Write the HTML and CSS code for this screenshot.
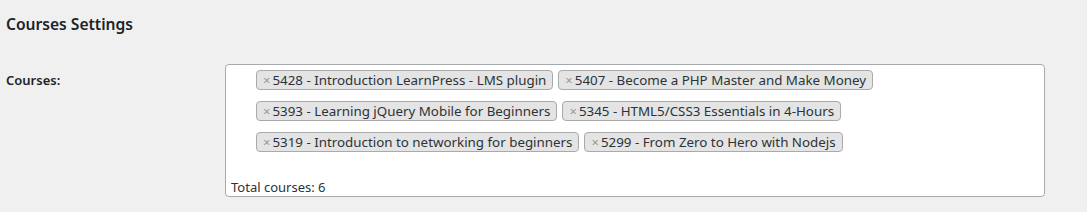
FILE: index.html
```html
<!DOCTYPE html>
<html lang="en">
<head>
    <meta charset="UTF-8">
    <meta name="viewport" content="width=device-width, initial-scale=1.0">
    <title>Courses Settings</title>
    <link rel="stylesheet" href="styles.css">
</head>
<body>
    <div class="wrap">
        <h2 class="section-title">Courses Settings</h2>
        <div class="form-row">
            <label class="field-label">Courses:</label>
            <div class="field">
                <div class="course-box">
                    <ul class="tags">
                        <li class="tag"><span class="tag-remove">×</span>5428 - Introduction LearnPress - LMS plugin</li>
                        <li class="tag"><span class="tag-remove">×</span>5407 - Become a PHP Master and Make Money</li>
                        <li class="tag"><span class="tag-remove">×</span>5393 - Learning jQuery Mobile for Beginners</li>
                        <li class="tag"><span class="tag-remove">×</span>5345 - HTML5/CSS3 Essentials in 4-Hours</li>
                        <li class="tag"><span class="tag-remove">×</span>5319 - Introduction to networking for beginners</li>
                        <li class="tag"><span class="tag-remove">×</span>5299 - From Zero to Hero with Nodejs</li>
                    </ul>
                    <p class="total">Total courses: 6</p>
                </div>
            </div>
        </div>
    </div>
</body>
</html>
```

FILE: styles.css
```css
body {
    font-family: "Noto Sans", sans-serif;
    font-size: 13px;
    margin: 0;
    padding: 0;
    background-color: #f0f0f1;
    color: #1d2327;
}
.wrap {
    padding: 0 6px;
}
.section-title {
    font-size: 15.6px;
    font-weight: 600;
    margin: 0;
    padding: 12px 0 0;
    height: 64px;
    box-sizing: border-box;
    line-height: 24px;
}
.form-row {
    display: flex;
    align-items: flex-start;
}
.field-label {
    width: 219px;
    font-weight: 600;
    font-size: 13px;
    padding-top: 6px;
    line-height: 20px;
}
.field {
    flex: 1;
    padding-right: 36px;
}
.course-box {
    background: #fff;
    border: 1px solid #a7aaad;
    border-radius: 4px;
    padding: 5px 6px 0 30px;
    height: 133px;
    box-sizing: border-box;
    display: flex;
    flex-direction: column;
}
.tags {
    list-style: none;
    margin: 0;
    padding: 0;
    display: flex;
    flex-wrap: wrap;
    column-gap: 5px;
    row-gap: 11px;
}
.tag {
    background: #e4e4e4;
    border: 1px solid #aaa;
    border-radius: 4px;
    padding: 0 6px 0 6px;
    height: 20px;
    box-sizing: border-box;
    line-height: 18px;
    color: #2c3338;
    font-size: 13.35px;
}
.tag-remove {
    color: #999;
    font-size: 13px;
    margin-right: 2px;
}
.total {
    margin: auto 0 -1px -25px;
    line-height: 20px;
    color: #2c3338;
}
```
